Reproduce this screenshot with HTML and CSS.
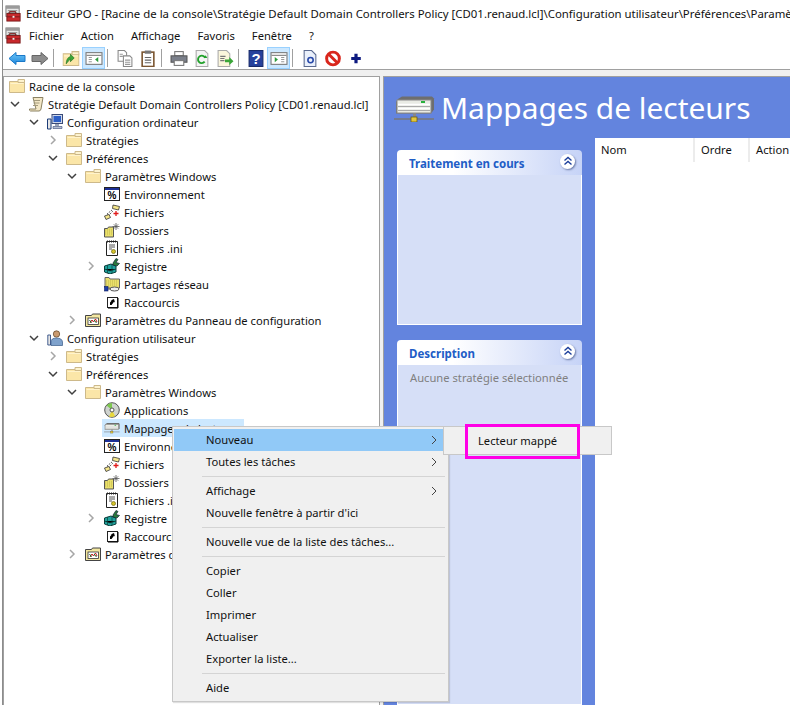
FILE: index.html
```html
<!DOCTYPE html>
<html lang="fr">
  <head>
    <meta charset="utf-8">
    <title>Editeur GPO</title>
    <link rel="stylesheet" href="styles.css">
  </head>
  <body>
    <svg class="defs" width="0" height="0">
      <symbol id="i-app" viewBox="0 0 18 18">
        <rect x="1" y="1" width="14" height="11" fill="#e8e8e8" stroke="#777"/>
        <rect x="1" y="1" width="14" height="3" fill="#9a9a9a"/>
        <path d="M3 6h10M3 8h10" stroke="#888"/>
        <rect x="5" y="7" width="6" height="3" fill="none" stroke="#7a1c1c"/>
        <rect x="2" y="9" width="14" height="8" fill="#c8282c" stroke="#7a1c1c"/>
        <path d="M2 12.500h14" stroke="#7a1c1c"/>
        <rect x="8" y="11.500" width="2" height="2" fill="#eee"/>
      </symbol>
      <symbol id="i-folder" viewBox="0 0 16 16">
        <path d="M.500 3.500h15v11H.500z" fill="#fbe6a8" stroke="#cdb98a"/>
        <path d="M9 1.500h6.500v3H9z" fill="#fdf3cf" stroke="#cdb98a"/>
        <path d="M1.500 5.500h13" stroke="#fff3cc"/>
      </symbol>
      <symbol id="i-scroll" viewBox="0 0 16 16">
        <path d="M5 1.500h10l-2 11.500q-.5 2-2 2H2.500q-1.500-.5-1-2H8z" fill="#f3e7c6" stroke="#8a8163"/>
        <path d="M6 4.500h6M5.500 7h6M5 9.500h5" stroke="#a39a7c"/>
      </symbol>
      <symbol id="i-computer" viewBox="0 0 16 16">
        <rect x="5" y=".500" width="10.500" height="9" fill="#cfd8ea" stroke="#3a4a78"/>
        <rect x="6.500" y="2" width="7.500" height="6" fill="#2d5fc6"/>
        <path d="M8 10h4v2H8z" fill="#9aa4b8"/>
        <path d="M.500 5h3.500v10H.500z" fill="#e6e6e6" stroke="#1c3c78"/>
        <path d="M6 12.500h9v2H6z" fill="#b5bfd2" stroke="#3a4a78" stroke-width=".6"/>
      </symbol>
      <symbol id="i-user" viewBox="0 0 16 16">
        <circle cx="9.500" cy="4" r="3.200" fill="#c99a70" stroke="#5c4024" stroke-width=".7"/>
        <path d="M4 15.500V12q0-4 5.500-4t6 4v3.500z" fill="#7fa2cc" stroke="#3a5a88" stroke-width=".7"/>
        <path d="M.800 5h2.700v10H.800z" fill="#e6e6e6" stroke="#1c3c78" stroke-width=".8"/>
      </symbol>
      <symbol id="i-env" viewBox="0 0 16 16">
        <rect x=".500" y="1.500" width="15" height="13" fill="#fff" stroke="#222"/>
        <rect x="1" y="2" width="14" height="2" fill="#1c2f96"/>
        <text class="glyph" x="8" y="13">%</text>
      </symbol>
      <symbol id="i-files" viewBox="0 0 16 16">
        <path d="M9 1l6.500 1.500-1 3.500-6-1.500z" fill="#f5e68a" stroke="#333" stroke-width=".8"/>
        <path d="M3 10l5-4 .5 1.500-4 4z" fill="#fff" stroke="#333" stroke-width=".8" stroke-dasharray="1.500 1"/>
        <path d="M.500 12l4.500-1.500 1.500 3L2 15.500z" fill="#f5e68a" stroke="#333" stroke-width=".8"/>
        <path d="M12 7v5M9.500 9.500h5" stroke="#e01a1a" stroke-width="1.300"/>
      </symbol>
      <symbol id="i-dirs" viewBox="0 0 16 16">
        <path d="M.500 6.500h3l1-1.500h5v10H.500z" fill="#e9df6c" stroke="#555"/>
        <path d="M1 8h8M1 10h8M1 12h8" stroke="#c0b64a" stroke-dasharray="1 1"/>
        <path d="M12 1v7M8.500 4.500h7M9.800 2.300l4.400 4.400M14.200 2.300l-4.400 4.400" stroke="#555" stroke-width=".8"/>
      </symbol>
      <symbol id="i-ini" viewBox="0 0 16 16">
        <path d="M2.500 1.500h11v14h-11z" fill="#fff" stroke="#222"/>
        <path d="M3 1.500h10" stroke="#222" stroke-dasharray="1 1" stroke-width="2"/>
        <path d="M5 5h6M5 7h6M5 9h3" stroke="#555"/>
        <circle cx="9.500" cy="11.500" r="2" fill="#d4c32a" stroke="#6e6612" stroke-width=".7"/>
      </symbol>
      <symbol id="i-reg" viewBox="0 0 16 16">
        <path d="M.500 8l6.500-2 5 2v6l-6 2-5.500-2z" fill="#1fa29c" stroke="#0c3f3c"/>
        <path d="M.500 11l5.500 2 6-2M3.500 7v8M8 6v9" stroke="#0c3f3c" stroke-width=".7"/>
        <path d="M9 5l3-4.500 2 1-2 3 3.500 1-2.500 2.500-4-1z" fill="#2b7a3c" stroke="#123" stroke-width=".7"/>
      </symbol>
      <symbol id="i-share" viewBox="0 0 16 16">
        <path d="M1 1.500h4l1 1.500h9.500v9H1z" fill="#e9df6c" stroke="#666"/>
        <path d="M2 5h12M2 7h12M2 9h12" stroke="#c0b64a" stroke-dasharray="1 1"/>
        <rect x=".500" y="10.500" width="3.500" height="4.500" fill="#1e3fa8" stroke="#0d1d60" stroke-width=".6"/>
        <path d="M4 13h3" stroke="#555"/>
        <ellipse cx="10.500" cy="13" rx="4.500" ry="2" fill="#eee" stroke="#555"/>
      </symbol>
      <symbol id="i-link" viewBox="0 0 16 16">
        <rect x="3.500" y="3.500" width="10" height="10" fill="#fff" stroke="#222"/>
        <path d="M14 4v10H4" fill="none" stroke="#000" stroke-width="1"/>
        <path d="M6 11V8.500l1.800-2H6.500l3.500-1.500L11 8.500l-1-.8L7.500 11z" fill="#000"/>
      </symbol>
      <symbol id="i-cpanel" viewBox="0 0 16 16">
        <path d="M.500 3.500h6l1-1.500h8v12.500H.500z" fill="#f3e7a0" stroke="#444"/>
        <rect x="3" y="6" width="10.500" height="6.500" fill="#fff" stroke="#333" stroke-width=".8"/>
        <path d="M5 11l2-3 1.500 2 2-3 1.500 3" fill="none" stroke="#c01818"/>
        <path d="M4.500 8l2 3M9 8l2.500 3" stroke="#1a6a2a"/>
      </symbol>
      <symbol id="i-disc" viewBox="0 0 16 16">
        <circle cx="8" cy="8" r="7.300" fill="#cfd3cf" stroke="#555"/>
        <path d="M8 8L2.500 3.500A7 7 0 0 1 8 1z" fill="#7ec850"/>
        <path d="M8 8l3 6A7 7 0 0 1 5 14.500z" fill="#e8d83c"/>
        <circle cx="8" cy="8" r="2" fill="#fff" stroke="#555"/>
      </symbol>
      <symbol id="i-drive" viewBox="0 0 41 26">
        <path d="M4 3l4-2.500h30l2 2v11l-3 4H2V6z" fill="#6e6e6e"/>
        <rect x="3" y="4" width="34" height="13" fill="#e9ebe4" stroke="#8a8a8a"/>
        <path d="M4 8.500h32M4 12.500h32" stroke="#fff" stroke-width="1.500"/>
        <path d="M4 10.500h32M4 14.500h32" stroke="#aaa"/>
        <rect x="27" y="5" width="4" height="2" fill="#27b03c"/>
        <path d="M19 17h3v4h-3z" fill="#888"/>
        <path d="M0 23h40" stroke="#777" stroke-width="1.500"/>
        <rect x="17" y="21" width="6" height="5" fill="#e2c53a" stroke="#5e5212" stroke-width=".7"/>
      </symbol>
      <symbol id="t-open" viewBox="0 0 10 10"><path d="M1 3l4 4 4-4" fill="none" stroke="#404040" stroke-width="1.500"/></symbol>
      <symbol id="t-closed" viewBox="0 0 10 10"><path d="M3 1l4 4-4 4" fill="none" stroke="#a6a6a6" stroke-width="1.500"/></symbol>
      <symbol id="i-collapse" viewBox="0 0 10 10"><path d="M1.500 4.500L5 1.500l3.500 3M1.500 8.500L5 5.500l3.500 3" fill="none" stroke="#1c3f9c" stroke-width="1.400"/></symbol>
    </svg>

    <div class="window">
      <div class="titlebar">
        <svg class="app-icon"><use href="#i-app"/></svg>
        <span class="title-text">Editeur GPO - [Racine de la console\Stratégie Default Domain Controllers Policy [CD01.renaud.lcl]\Configuration utilisateur\Préférences\Paramètres Windows\Mappages de lecteurs]</span>
      </div>
      <div class="menubar">
        <svg class="app-icon"><use href="#i-app"/></svg>
        <span>Fichier</span><span>Action</span><span>Affichage</span><span>Favoris</span><span>Fenêtre</span><span>?</span>
      </div>
      <div class="toolbar">
        <button class="tool"><svg viewBox="0 0 18 16"><defs><linearGradient id="g-back" x1="0" y1="0" x2="0" y2="1"><stop offset="0" stop-color="#6cc6f7"/><stop offset="1" stop-color="#1f86dc"/></linearGradient></defs><path d="M1 8l7-6v3h9v6H8v3z" fill="url(#g-back)" stroke="#1a78c8"/></svg></button>
        <button class="tool"><svg viewBox="0 0 18 16"><path d="M17 8l-7-6v3H1v6h9v3z" fill="#8c8c8c" stroke="#666"/></svg></button>
        <i class="sep"></i>
        <button class="tool"><svg viewBox="0 0 16 16"><use href="#i-folder"/><path d="M3.500 13q0-5.500 4-7V4l3.500 3.500L7.500 11V8.500q-2 1.500-4 4.500z" fill="#3aa638" stroke="#1e6e1e" stroke-width=".6"/></svg></button>
        <button class="tool on"><svg viewBox="0 0 16 16"><rect x=".500" y="2.500" width="15" height="11" fill="#fff" stroke="#777"/><path d="M1 5h14" stroke="#777"/><path d="M3 7h3M3 9h3M3 11h3" stroke="#999"/><path d="M12 6.500v5L9 9z" fill="#2a9a3a"/></svg></button>
        <i class="sep"></i>
        <button class="tool"><svg viewBox="0 0 16 16"><path d="M1.500 .500h6l2 2v8h-8z" fill="#fff" stroke="#888"/><path d="M6.500 5.500h6l2 2v8h-8z" fill="#fff" stroke="#888"/><path d="M3 4h3M3 6h3M8 9.500h5M8 11.500h5M8 13.500h5" stroke="#999"/></svg></button>
        <button class="tool"><svg viewBox="0 0 16 16"><rect x="2.500" y="2" width="11" height="13.500" fill="#fff" stroke="#7a5530" stroke-width="1.500"/><rect x="5" y=".500" width="6" height="3" fill="#777"/><path d="M5 7h6M5 9.500h6M5 12h6" stroke="#666"/></svg></button>
        <i class="sep"></i>
        <button class="tool"><svg viewBox="0 0 16 16"><rect x="4" y="1.500" width="8" height="4" fill="#fff" stroke="#777"/><rect x=".500" y="5.500" width="15" height="6" fill="#7a7f8a" stroke="#555"/><rect x="3.500" y="10" width="9" height="4.500" fill="#fff" stroke="#777"/></svg></button>
        <button class="tool"><svg viewBox="0 0 16 16"><path d="M2.500 .500h8l3 3v12h-11z" fill="#f4f4f4" stroke="#aaa"/><path d="M11 7.500a3.500 3.500 0 1 0-.5 3.500" fill="none" stroke="#23a12c" stroke-width="1.800"/><path d="M9.500 7.500h3.500l-1.500-2.500z" fill="#23a12c"/></svg></button>
        <button class="tool"><svg viewBox="0 0 16 16"><path d="M1.500 .500h8l3 3v12h-11z" fill="#fbf6dc" stroke="#aaa"/><path d="M3.500 6h5M3.500 8h4M3.500 10h4" stroke="#777"/><path d="M8 9h4V6.500L16 10.500 12 14v-2.500H8z" fill="#3aa638"/></svg></button>
        <i class="sep"></i>
        <button class="tool"><svg viewBox="0 0 16 16"><rect x="1.500" y=".500" width="13" height="15" fill="#26419c" stroke="#172a6a"/><text class="help-glyph" x="8" y="13">?</text></svg></button>
        <button class="tool on"><svg viewBox="0 0 16 16"><rect x=".500" y="2.500" width="15" height="11" fill="#fff" stroke="#777"/><path d="M1 5h14" stroke="#777"/><path d="M10 7h3M10 9h3M10 11h3" stroke="#999"/><path d="M4 6.500v5L7 9z" fill="#2a9a3a"/></svg></button>
        <i class="sep"></i>
        <button class="tool"><svg viewBox="0 0 16 16"><path d="M2.500 .5h7l4 4v11h-11z" fill="#eaf0fb" stroke="#5a6a90"/><circle cx="8.500" cy="9.500" r="2.500" fill="none" stroke="#2647a8" stroke-width="1.500"/></svg></button>
        <button class="tool"><svg viewBox="0 0 16 16"><circle cx="8" cy="8" r="6" fill="#fff" stroke="#d9261c" stroke-width="2.800"/><path d="M4 4l8 8" stroke="#d9261c" stroke-width="2.800"/></svg></button>
        <button class="tool"><svg viewBox="0 0 16 16"><path d="M8 3.500v9M3.500 8h9" stroke="#0d1a80" stroke-width="3"/></svg></button>
      </div>

      <div class="workspace">
        <div class="tree">
          <div class="row d0"><i class="twisty"></i><svg class="ico"><use href="#i-folder"/></svg>Racine de la console</div>
          <div class="row d1"><svg class="twisty"><use href="#t-open"/></svg><svg class="ico"><use href="#i-scroll"/></svg>Stratégie Default Domain Controllers Policy [CD01.renaud.lcl]</div>
          <div class="row d2"><svg class="twisty"><use href="#t-open"/></svg><svg class="ico"><use href="#i-computer"/></svg>Configuration ordinateur</div>
          <div class="row d3"><svg class="twisty"><use href="#t-closed"/></svg><svg class="ico"><use href="#i-folder"/></svg>Stratégies</div>
          <div class="row d3"><svg class="twisty"><use href="#t-open"/></svg><svg class="ico"><use href="#i-folder"/></svg>Préférences</div>
          <div class="row d4"><svg class="twisty"><use href="#t-open"/></svg><svg class="ico"><use href="#i-folder"/></svg>Paramètres Windows</div>
          <div class="row d5"><i class="twisty"></i><svg class="ico"><use href="#i-env"/></svg>Environnement</div>
          <div class="row d5"><i class="twisty"></i><svg class="ico"><use href="#i-files"/></svg>Fichiers</div>
          <div class="row d5"><i class="twisty"></i><svg class="ico"><use href="#i-dirs"/></svg>Dossiers</div>
          <div class="row d5"><i class="twisty"></i><svg class="ico"><use href="#i-ini"/></svg>Fichiers .ini</div>
          <div class="row d5"><svg class="twisty"><use href="#t-closed"/></svg><svg class="ico"><use href="#i-reg"/></svg>Registre</div>
          <div class="row d5"><i class="twisty"></i><svg class="ico"><use href="#i-share"/></svg>Partages réseau</div>
          <div class="row d5"><i class="twisty"></i><svg class="ico"><use href="#i-link"/></svg>Raccourcis</div>
          <div class="row d4"><svg class="twisty"><use href="#t-closed"/></svg><svg class="ico"><use href="#i-cpanel"/></svg>Paramètres du Panneau de configuration</div>
          <div class="row d2"><svg class="twisty"><use href="#t-open"/></svg><svg class="ico"><use href="#i-user"/></svg>Configuration utilisateur</div>
          <div class="row d3"><svg class="twisty"><use href="#t-closed"/></svg><svg class="ico"><use href="#i-folder"/></svg>Stratégies</div>
          <div class="row d3"><svg class="twisty"><use href="#t-open"/></svg><svg class="ico"><use href="#i-folder"/></svg>Préférences</div>
          <div class="row d4"><svg class="twisty"><use href="#t-open"/></svg><svg class="ico"><use href="#i-folder"/></svg>Paramètres Windows</div>
          <div class="row d5"><i class="twisty"></i><svg class="ico"><use href="#i-disc"/></svg>Applications</div>
          <div class="row d5"><i class="twisty"></i><span class="selected"><svg class="ico"><use href="#i-drive"/></svg>Mappages de lecteurs</span></div>
          <div class="row d5"><i class="twisty"></i><svg class="ico"><use href="#i-env"/></svg>Environnement</div>
          <div class="row d5"><i class="twisty"></i><svg class="ico"><use href="#i-files"/></svg>Fichiers</div>
          <div class="row d5"><i class="twisty"></i><svg class="ico"><use href="#i-dirs"/></svg>Dossiers</div>
          <div class="row d5"><i class="twisty"></i><svg class="ico"><use href="#i-ini"/></svg>Fichiers .ini</div>
          <div class="row d5"><svg class="twisty"><use href="#t-closed"/></svg><svg class="ico"><use href="#i-reg"/></svg>Registre</div>
          <div class="row d5"><i class="twisty"></i><svg class="ico"><use href="#i-link"/></svg>Raccourcis</div>
          <div class="row d4"><svg class="twisty"><use href="#t-closed"/></svg><svg class="ico"><use href="#i-cpanel"/></svg>Paramètres du Panneau de configuration</div>
        </div>

        <div class="view">
          <div class="view-head">
            <svg class="view-icon"><use href="#i-drive"/></svg>
            <h1>Mappages de lecteurs</h1>
          </div>
          <div class="view-body">
            <div class="tasks">
              <section class="card card-short">
                <div class="card-head"><b>Traitement en cours</b><span class="collapse"><svg><use href="#i-collapse"/></svg></span></div>
                <div class="card-body"></div>
              </section>
              <section class="card card-long">
                <div class="card-head"><b>Description</b><span class="collapse"><svg><use href="#i-collapse"/></svg></span></div>
                <div class="card-body">Aucune stratégie sélectionnée</div>
              </section>
            </div>
            <div class="list">
              <div class="list-head">
                <span class="col-nom">Nom</span><span class="col-ordre">Ordre</span><span class="col-action">Action</span>
              </div>
            </div>
          </div>
        </div>
      </div>
    </div>

    <ul class="menu">
      <li class="item hot">Nouveau<svg class="arrow" viewBox="0 0 6 10"><path d="M1 1l4 4-4 4" fill="none" stroke="#444"/></svg></li>
      <li class="item">Toutes les tâches<svg class="arrow" viewBox="0 0 6 10"><path d="M1 1l4 4-4 4" fill="none" stroke="#444"/></svg></li>
      <li class="rule"></li>
      <li class="item">Affichage<svg class="arrow" viewBox="0 0 6 10"><path d="M1 1l4 4-4 4" fill="none" stroke="#444"/></svg></li>
      <li class="item">Nouvelle fenêtre à partir d'ici</li>
      <li class="rule"></li>
      <li class="item">Nouvelle vue de la liste des tâches...</li>
      <li class="rule"></li>
      <li class="item">Copier</li>
      <li class="item">Coller</li>
      <li class="item">Imprimer</li>
      <li class="item">Actualiser</li>
      <li class="item">Exporter la liste...</li>
      <li class="rule"></li>
      <li class="item">Aide</li>
    </ul>
    <div class="submenu">Lecteur mappé</div>
    <div class="callout"></div>
  </body>
</html>
```

FILE: styles.css
```css
html, body {
  margin: 0;
  height: 100%;
  overflow: hidden;
  background: #fff;
  color: #111;
  font-family: "Noto Sans", "Open Sans", sans-serif;
  font-size: 11.2px;
}
.defs {
  position: absolute;
}
.glyph {
  font-family: "Liberation Sans", sans-serif;
  font-size: 10px;
  font-weight: bold;
  text-anchor: middle;
  fill: #000;
}
.help-glyph {
  font-family: "Liberation Sans", sans-serif;
  font-size: 14px;
  font-weight: bold;
  text-anchor: middle;
  fill: #fff;
}
.window {
  height: 100vh;
  display: flex;
  flex-direction: column;
  border-left: 1px solid #8c8c8c;
  margin-left: 2px;
}
.titlebar {
  height: 24px;
  flex: none;
  padding: 2px 0 0 2px;
  box-sizing: border-box;
  display: flex;
  align-items: center;
  white-space: nowrap;
  overflow: hidden;
}
.title-text {
  margin-left: 4px;
  font-size: 11.4px;
}
.app-icon {
  width: 17px;
  height: 17px;
  flex: none;
}
.menubar {
  height: 23px;
  flex: none;
  box-sizing: border-box;
  padding: 0 0 1px 2px;
  display: flex;
  align-items: center;
}
.menubar span {
  margin: 0 8.5px;
}
.menubar .app-icon {
  margin-right: -1.500px;
}
.toolbar {
  height: 23px;
  flex: none;
  box-sizing: border-box;
  padding-left: 2px;
  display: flex;
  align-items: center;
  border-bottom: 1px solid #a0a0a0;
}
.tool {
  width: 23px;
  height: 22px;
  padding: 0;
  background: none;
  border: 1px solid transparent;
  display: flex;
  align-items: center;
  justify-content: center;
}
.tool svg {
  width: 18px;
  height: 17px;
}
.tool.on {
  background: #cce8ff;
  border-color: #99d1ff;
}
.sep {
  width: 1px;
  height: 18px;
  margin: 0 5px 0 2px;
  background: #a0a0a0;
}
.workspace {
  flex: 1;
  min-height: 0;
  display: flex;
  gap: 3px;
  background: #f0f0f0;
  padding-top: 6px;
}
.tree {
  width: 377px;
  flex: none;
  box-sizing: border-box;
  padding: 0 0 0 5px;
  background: #fff;
  border: 1px solid #a0a0a0;
  border-bottom: none;
  overflow: hidden;
}
.row {
  height: 18px;
  display: flex;
  align-items: center;
  white-space: nowrap;
}
.d1 { padding-left: 19px; }
.d2 { padding-left: 38px; }
.d3 { padding-left: 57px; }
.d4 { padding-left: 76px; }
.d5 { padding-left: 95px; }
.twisty {
  width: 10px;
  height: 10px;
  flex: none;
  margin-left: -18px;
  margin-right: 8px;
}
.ico {
  width: 16px;
  height: 16px;
  flex: none;
  margin-right: 4px;
}
.selected {
  display: flex;
  align-items: center;
  height: 18px;
  width: 142px;
  margin-left: -2px;
  padding-left: 2px;
  box-sizing: border-box;
  background: #cce8ff;
}
.view {
  flex: 1;
  min-width: 0;
  display: flex;
  flex-direction: column;
  background: #6384de;
  border-top: 1px solid #a0a0a0;
  border-left: 1px solid #a0a0a0;
}
.view-head {
  height: 61px;
  flex: none;
  display: flex;
  align-items: center;
  padding-left: 10px;
  box-sizing: border-box;
}
.view-icon {
  width: 41px;
  height: 26px;
  margin-top: 2px;
}
h1 {
  margin: 0 0 0 6px;
  color: #fff;
  font-size: 29.9px;
  font-weight: normal;
  white-space: nowrap;
}
.view-body {
  flex: 1;
  min-height: 0;
  display: flex;
}
.tasks {
  width: 185px;
  flex: none;
  padding: 12px 13px 0 13px;
  display: flex;
  flex-direction: column;
  gap: 15px;
}
.card {
  display: flex;
  flex-direction: column;
}
.card-short {
  height: 175px;
}
.card-long {
  flex: 1;
}
.card-head {
  height: 25px;
  flex: none;
  box-sizing: border-box;
  padding: 2px 7px 0 12px;
  display: flex;
  align-items: center;
  justify-content: space-between;
  background: linear-gradient(to right, #fff 30%, #c6d3f7);
  border-radius: 4px 4px 0 0;
}
.card-head b {
  color: #215dc6;
  font-size: 11.5px;
}
.collapse {
  width: 15px;
  height: 15px;
  border-radius: 50%;
  background: #fff;
  box-shadow: 1px 1px 2px #6a7aa8;
  display: flex;
  align-items: center;
  justify-content: center;
  margin-top: -5px;
}
.collapse svg {
  width: 10px;
  height: 10px;
}
.card-body {
  flex: 1;
  padding: 5px 12px;
  background: #d6dff7;
  border: 1px solid #fff;
  border-top: none;
  color: #808080;
  white-space: nowrap;
}
.list {
  flex: 1;
  background: #fff;
}
.list-head {
  height: 24px;
  display: flex;
  align-items: center;
}
.list-head span {
  box-sizing: border-box;
  height: 24px;
  line-height: 24px;
  padding-left: 6px;
  border-right: 2px solid #ececec;
  white-space: nowrap;
}
.col-nom { width: 100px; }
.col-ordre { width: 55px; }
.col-action {
  flex: 1;
  border-right: none !important;
}

/* context menu floats over the tree */
.menu {
  position: absolute;
  left: 172px;
  top: 426px;
  width: 277px;
  height: 276px;
  box-sizing: border-box;
  margin: 0;
  padding: 2px 1px;
  list-style: none;
  background: #f0f0f0;
  border: 1px solid #c8c8c8;
  box-shadow: 1px 1px 1px rgba(0, 0, 0, .12);
}
.item {
  position: relative;
  height: 22px;
  line-height: 22px;
  padding-left: 32px;
  white-space: nowrap;
}
.item.hot {
  background: #91c9f7;
}
.arrow {
  position: absolute;
  right: 10px;
  top: 6px;
  width: 6px;
  height: 10px;
}
.rule {
  height: 1px;
  margin: 3px 2px 3px 28px;
  background: #d4d4d4;
}
.submenu {
  position: absolute;
  left: 443px;
  top: 426px;
  width: 169px;
  height: 29px;
  box-sizing: border-box;
  padding-left: 34px;
  line-height: 27px;
  background: #f0f0f0;
  border: 1px solid #c8c8c8;
}
.callout {
  position: absolute;
  left: 465px;
  top: 424px;
  width: 115px;
  height: 35px;
  box-sizing: border-box;
  border: 3px solid #ff00e6;
}
```
